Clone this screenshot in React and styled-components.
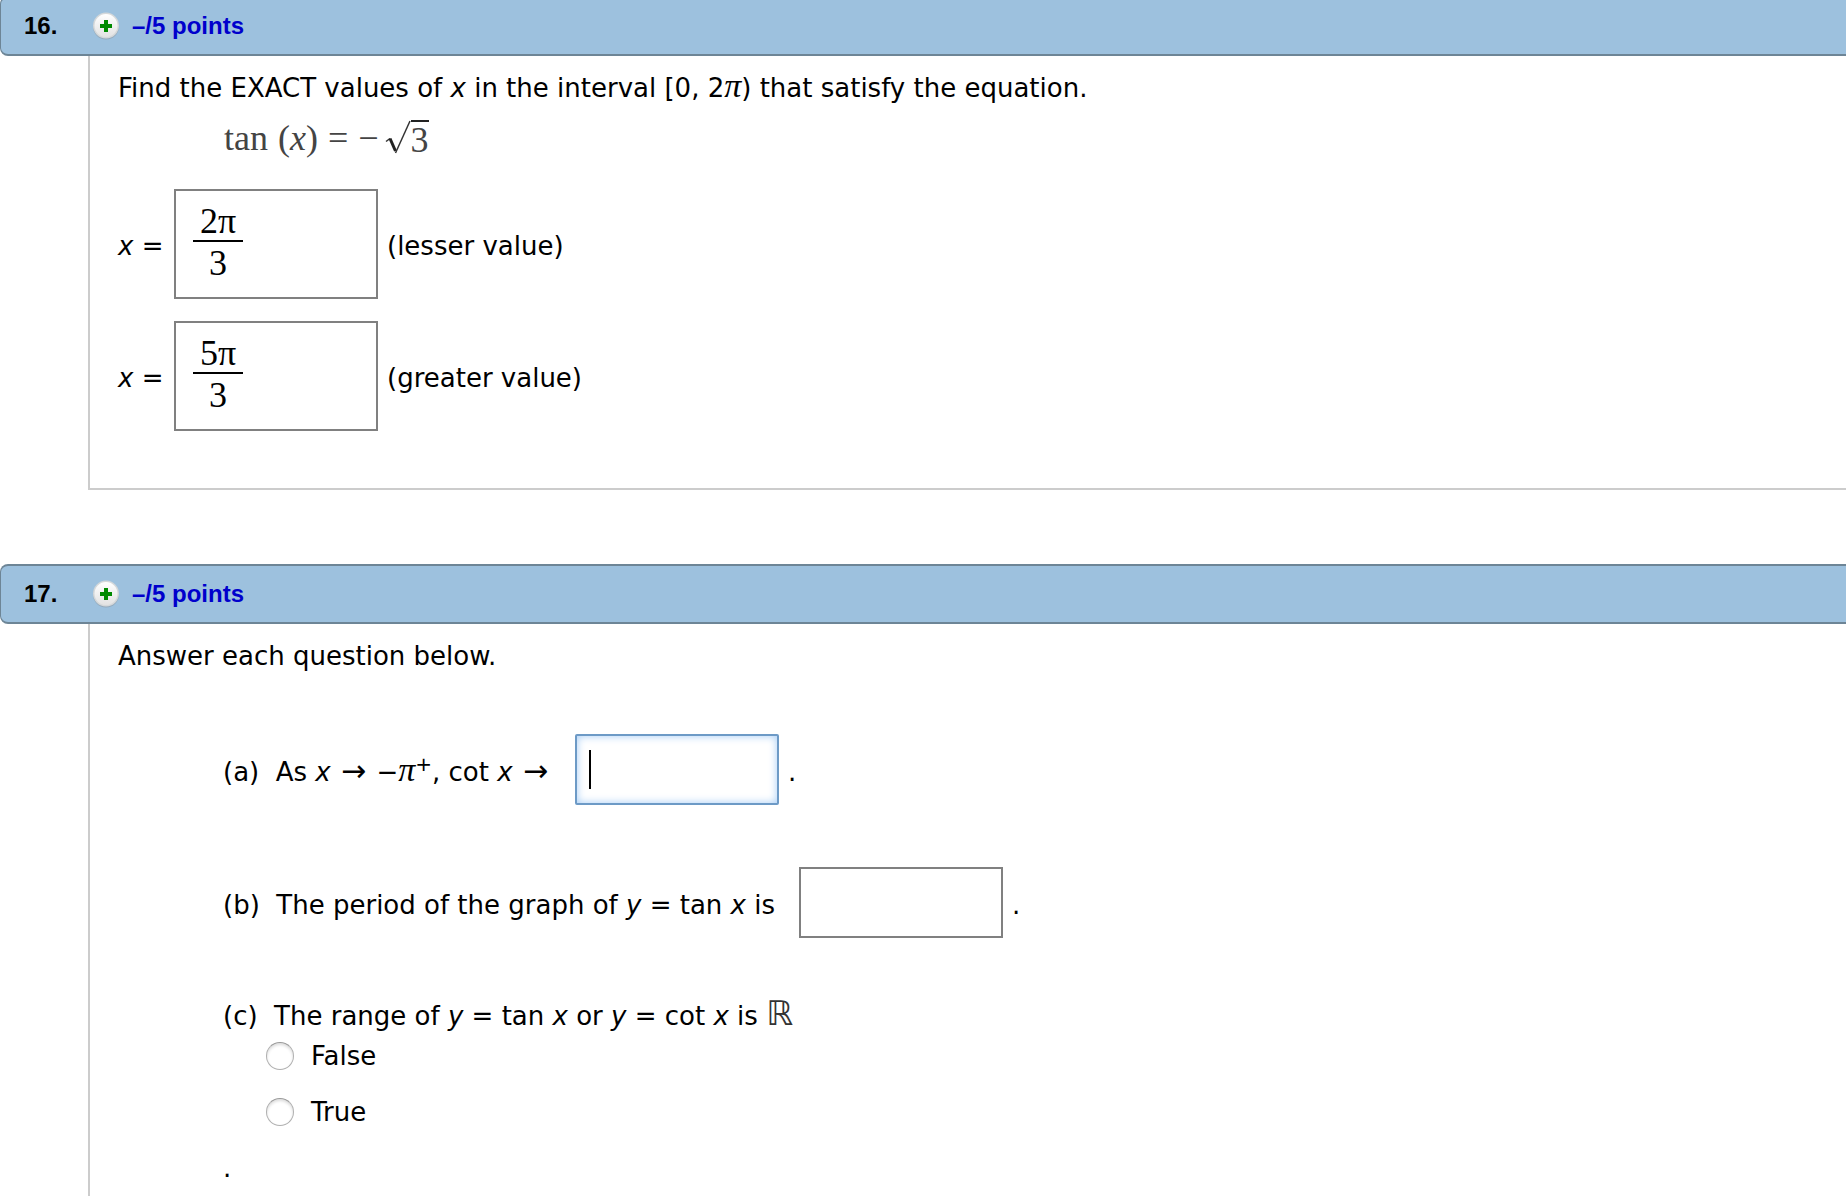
import React, { useState } from 'react'
import styled, { createGlobalStyle, css } from 'styled-components'

const GlobalStyle = createGlobalStyle`
  * {
    box-sizing: border-box;
  }

  body {
    margin: 0;
    background: #fff;
    color: #000;
    font-family: Verdana, 'DejaVu Sans', sans-serif;
    font-size: 26px;
    line-height: 32px;
  }
`

function PlusIcon() {
  return (
    <svg width="28" height="28" viewBox="0 0 28 28" aria-hidden="true">
      <defs>
        <linearGradient id="badge" x1="0" y1="0" x2="0" y2="1">
          <stop offset="0" stopColor="#fff" />
          <stop offset="1" stopColor="#e2e2e2" />
        </linearGradient>
      </defs>
      <circle cx="14" cy="14.6" r="13" fill="#8d9aa3" opacity="0.6" />
      <circle cx="14" cy="13.6" r="13" fill="#d4d8da" />
      <circle cx="14" cy="13.6" r="11.5" fill="url(#badge)" />
      <path d="M12 8h4v4h4v4h-4v4h-4v-4H8v-4h4z" fill="#008a00" />
    </svg>
  )
}

function Header({ number }) {
  return (
    <HeaderStyled>
      <span className="number">{number}.</span>
      <a href="#points">
        <PlusIcon />
        –/5 points
      </a>
    </HeaderStyled>
  )
}

function FractionAnswer({ id, top, bottom, note }) {
  const [numerator, setNumerator] = useState(top);
  const [denominator, setDenominator] = useState(bottom);

  return (
    <AnswerRow>
      <Label htmlFor={id} $width="47px"><i>x</i> =</Label>
      <AnswerBox>
        <Fraction>
          <input id={id} value={numerator} onChange={(e) => setNumerator(e.target.value)} />
          <input aria-label="denominator" value={denominator} onChange={(e) => setDenominator(e.target.value)} />
        </Fraction>
      </AnswerBox>
      <Label as="span">{note}</Label>
    </AnswerRow>
  )
}

export default function App() {
  const [range, setRange] = useState('');

  return (
    <Page>
      <GlobalStyle />
      <Header number={16} />
      <Body>
        <p>
          Find the EXACT values of <i>x</i> in the interval [0, 2<Pi>π</Pi>) that satisfy the equation.
        </p>
        <Equation>
          <span>tan</span>
          <span>(<i>x</i>)</span>
          <span>=</span>
          <span className="root">
            −
            <svg width="26" height="34" viewBox="0 0 26 34" aria-hidden="true">
              <path d="M1 21.500l4-3" stroke="#333" strokeWidth="1.500" fill="none" />
              <path d="M5 18.500L10.500 31" stroke="#222" strokeWidth="3" fill="none" />
              <path d="M10.500 33L25 1" stroke="#333" strokeWidth="1.500" fill="none" />
            </svg>
            <span className="radicand">3</span>
          </span>
        </Equation>
        <Answers>
          <FractionAnswer id="lesser" top="2π" bottom="3" note="(lesser value)" />
          <FractionAnswer id="greater" top="5π" bottom="3" note="(greater value)" />
        </Answers>
      </Body>

      <Gap />
      <Header number={17} />
      <Body $open>
        <p>Answer each question below.</p>
        <Parts>
          <AnswerRow>
            <Label htmlFor="limit" $width="343px">
              (a)&nbsp; As <i>x</i> <Arrow>→</Arrow> −<Pi>π</Pi><Sup>+</Sup>, cot <i>x</i> <Arrow>→</Arrow>
            </Label>
            <Field>
              <AnswerInput id="limit" autoFocus $active />
              <Caret />
            </Field>
            <Label as="span">.</Label>
          </AnswerRow>
          <AnswerRow>
            <Label htmlFor="period" $width="567px">
              (b)&nbsp; The period of the graph of <i>y</i> = tan <i>x</i> is
            </Label>
            <AnswerInput id="period" />
            <Label as="span">.</Label>
          </AnswerRow>
          <Choices>
            <legend>
              (c)&nbsp; The range of <i>y</i> = tan <i>x</i> or <i>y</i> = cot <i>x</i> is <Reals>ℝ</Reals>
            </legend>
            {['False', 'True'].map((option) => (
              <Choice key={option}>
                <input
                  type="radio"
                  name="range"
                  checked={range === option}
                  onChange={() => setRange(option)}
                />
                {option}
              </Choice>
            ))}
          </Choices>
        </Parts>
        <Ending>.</Ending>
      </Body>
    </Page>
  )
}

const Page = styled.main`
  display: flex;
  flex-direction: column;
  min-height: 100vh;
  overflow: hidden;

  /* the first bar is scrolled slightly past the top edge */
  > header:first-of-type {
    margin-top: -4px;
  }
`

const HeaderStyled = styled.header`
  display: flex;
  align-items: center;
  height: 60px;
  padding-left: 23px;
  padding-bottom: 1px;
  background: #9dc1de;
  border: 2px solid #6d8596;
  border-left-width: 1px;
  border-right: none;
  border-radius: 8px 0 0 8px;
  font: bold 24px/28px Arial, 'Liberation Sans', sans-serif;

  .number {
    width: 68px;
  }

  a {
    display: flex;
    align-items: center;
    gap: 12px;
    color: #0000cc;
    text-decoration: none;
  }
`

const Body = styled.section`
  margin-left: 88px;
  padding: 16px 0 57px 28px;
  border-left: 2px solid #ccc;
  border-bottom: 2px solid #ccc;

  ${({ $open }) => $open && css`
    flex: 1;
    padding-bottom: 14px;
    border-bottom: none;
  `}

  p {
    margin: 0;
  }
`

const Gap = styled.div`
  height: 74px;
`

const Pi = styled.i`
  font-family: 'Liberation Serif', serif;
  font-size: 34px;
  line-height: 0;
`

const Arrow = styled.span`
  padding: 0 2px;
  font-size: 30px;
  line-height: 0;
`

const Sup = styled.sup`
  font-size: 20px;
  line-height: 0;
`

const Reals = styled.span`
  color: #333;
  font-size: 34px;
  line-height: 0;
`

const Equation = styled.div`
  display: flex;
  align-items: baseline;
  height: 40px;
  margin: 14px 0 31px 106px;
  color: #444;
  font: 36px/40px 'Liberation Serif', serif;

  > span + span {
    margin-left: 10px;
  }

  .root {
    display: flex;
  }

  svg {
    margin: 2px 0 0 6px;
  }

  .radicand {
    height: 36px;
    margin-top: 2px;
    border-top: 2px solid #222;
    line-height: 36px;
  }
`

const Answers = styled.div`
  display: grid;
  gap: 22px;
`

const Parts = styled.div`
  display: grid;
  gap: 62px;
  margin: 62px 0 24px 105px;
`

const AnswerRow = styled.div`
  display: flex;
  align-items: center;
  gap: 9px;
`

const Label = styled.label`
  width: ${({ $width }) => $width || 'auto'};
  padding-top: 4px;
  white-space: nowrap;
`

const boxLook = css`
  width: 204px;
  border: 2px solid #808080;
  border-radius: 0;
  background: #fff;
`

const AnswerBox = styled.div`
  ${boxLook}
  height: 110px;
  padding: 11px 17px;
`

const Fraction = styled.div`
  width: 50px;

  input {
    display: block;
    width: 100%;
    height: 38px;
    padding: 0;
    border: none;
    outline: none;
    background: none;
    color: #000;
    font: 36px/36px 'Liberation Serif', serif;
    text-align: center;
  }

  input + input {
    height: 44px;
    border-top: 2px solid #000;
  }
`

const Field = styled.div`
  position: relative;
  display: flex;
`

const AnswerInput = styled.input`
  ${boxLook}
  height: 71px;
  padding: 0 12px;
  outline: none;
  font: 34px/40px 'Liberation Serif', serif;

  ${({ $active }) => $active && css`
    border-color: #6d9ac6;
    border-radius: 2px;
    box-shadow: inset 0 0 8px #a3cbf5;
    caret-color: transparent;
  `}
`

const Caret = styled.span`
  position: absolute;
  top: 16px;
  left: 14px;
  width: 2px;
  height: 39px;
  background: #000;
  pointer-events: none;
`

const Choices = styled.fieldset`
  display: grid;
  gap: 24px;
  margin: 0;
  padding: 0;
  border: none;

  legend {
    height: 32px;
    margin-bottom: 8px;
    padding: 0;
  }
`

const Choice = styled.label`
  display: flex;
  align-items: center;
  gap: 17px;
  height: 32px;
  padding-left: 43px;

  input {
    appearance: none;
    width: 28px;
    height: 28px;
    margin: 0;
    border: 1px solid #b0b0b0;
    border-top-color: #999;
    border-radius: 50%;
    background: #fff;
    box-shadow: inset 0 2px 3px #ddd;
  }

  input:checked {
    background: radial-gradient(#333 0 5px, #fff 6px);
  }
`

const Ending = styled.div`
  margin-left: 105px;
`
